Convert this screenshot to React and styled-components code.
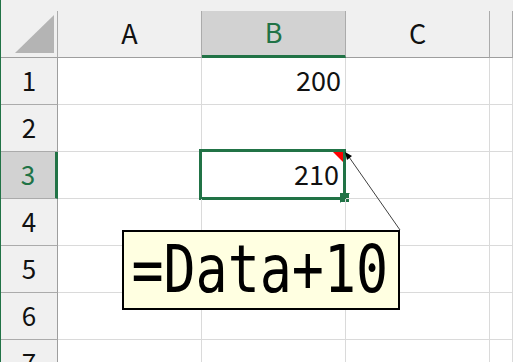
import React from "react";
import styled, { createGlobalStyle } from "styled-components";

const GREEN = "#217346";

const GlobalStyle = createGlobalStyle`
  html, body {
    margin: 0;
    padding: 0;
    background: #ffffff;
    overflow: hidden;
  }
`;

const Sheet = styled.div`
  position: relative;
  width: 512px;
  height: 362px;
  overflow: hidden;
  border-left: 1px solid ${GREEN};
  background: #ffffff;
  font-family: "Noto Sans CJK JP", "Noto Sans", sans-serif;
`;

const TopStrip = styled.div`
  height: 11px;
  background: #f0f0f0;
`;

const Grid = styled.div`
  display: grid;
  grid-template-columns: 57px 144px 144px 144px 1fr;
  grid-auto-rows: 47px;
`;

const Corner = styled.div`
  box-sizing: border-box;
  background: #f0f0f0;
  border-right: 1px solid #ababab;
  border-bottom: 1px solid #9e9e9e;
`;

const ColHead = styled.div`
  box-sizing: border-box;
  display: flex;
  align-items: center;
  justify-content: center;
  padding-bottom: 3px;
  font-size: 27px;
  background: ${(p) => (p.$selected ? "#d2d2d2" : "#f0f0f0")};
  color: ${(p) => (p.$selected ? GREEN : "#111")};
  border-right: 1px solid #ababab;
  border-bottom: ${(p) => (p.$selected ? `3px solid ${GREEN}` : "1px solid #9e9e9e")};
`;

const RowHead = styled.div`
  box-sizing: border-box;
  display: flex;
  align-items: center;
  justify-content: center;
  padding-bottom: 3px;
  font-size: 26px;
  background: ${(p) => (p.$selected ? "#d2d2d2" : "#f0f0f0")};
  color: ${(p) => (p.$selected ? GREEN : "#111")};
  border-right: ${(p) => (p.$selected ? `3px solid ${GREEN}` : "1px solid #9e9e9e")};
  border-bottom: 1px solid #ababab;
`;

const Cell = styled.div`
  position: relative;
  box-sizing: border-box;
  display: flex;
  align-items: center;
  justify-content: flex-end;
  padding: 0 ${(p) => (p.$selected ? "6px" : "4px")} 3px 0;
  font-size: 27px;
  color: #111;
  border-right: 1px solid #dadada;
  border-bottom: 1px solid #dadada;
`;

const SelectionFrame = styled.div`
  position: absolute;
  top: -3px;
  left: -3px;
  right: -1px;
  bottom: -2px;
  border: 3px solid ${GREEN};
  pointer-events: none;
`;

const FillHandle = styled.div`
  position: absolute;
  right: -5px;
  bottom: -5px;
  width: 8px;
  height: 8px;
  background: ${GREEN};
  border: 1px solid #ffffff;
  border-top-color: transparent;
  border-left-color: transparent;
`;

const CommentMark = styled.div`
  position: absolute;
  top: 0;
  right: 2px;
  width: 0;
  height: 0;
  border-top: 10px solid #ff0000;
  border-left: 10px solid transparent;
`;

const Callout = styled.div`
  position: absolute;
  inset: 0;
  pointer-events: none;
`;

const Leader = styled.svg`
  display: block;
  margin-left: -1px;
`;

const Comment = styled.div`
  position: absolute;
  left: 121px;
  top: 230px;
  width: 278px;
  height: 80px;
  box-sizing: border-box;
  border: 2px solid #000;
  background: #ffffe1;
  overflow: hidden;
`;

const CommentText = styled.div`
  font-family: "DejaVu Sans Mono", "Liberation Mono", monospace;
  font-size: 65px;
  line-height: 76px;
  color: #000;
  white-space: nowrap;
  padding-left: 9px;
  transform: scaleX(0.82);
  transform-origin: left center;
`;

const cols = ["A", "B", "C", ""];
const data = { 1: { B: "200" }, 3: { B: "210" } };

export default function App() {
  const rows = [1, 2, 3, 4, 5, 6, 7];
  return (
    <>
      <GlobalStyle />
      <Sheet>
        <TopStrip />
        <Grid>
          <Corner>
            <svg width="56" height="46">
              <polygon points="14,42 53,4 53,42" fill="#b4b4b4" />
            </svg>
          </Corner>
          {cols.map((c, i) => (
            <ColHead key={i} $selected={c === "B"}>
              {c}
            </ColHead>
          ))}
          {rows.map((r) => (
            <React.Fragment key={r}>
              <RowHead $selected={r === 3}>{r}</RowHead>
              {cols.map((c, i) => {
                const sel = r === 3 && c === "B";
                return (
                  <Cell key={i} $selected={sel}>
                    {data[r] && data[r][c]}
                    {sel && (
                      <>
                        <CommentMark />
                        <SelectionFrame />
                        <FillHandle />
                      </>
                    )}
                  </Cell>
                );
              })}
            </React.Fragment>
          ))}
        </Grid>
        <Callout>
          <Leader width="513" height="362">
            <line x1="349" y1="157" x2="400" y2="230" stroke="#404040" strokeWidth="1" />
            <polygon points="345,152 352,156 347,160" fill="#000" />
          </Leader>
          <Comment>
            <CommentText>=Data+10</CommentText>
          </Comment>
        </Callout>
      </Sheet>
    </>
  );
}
